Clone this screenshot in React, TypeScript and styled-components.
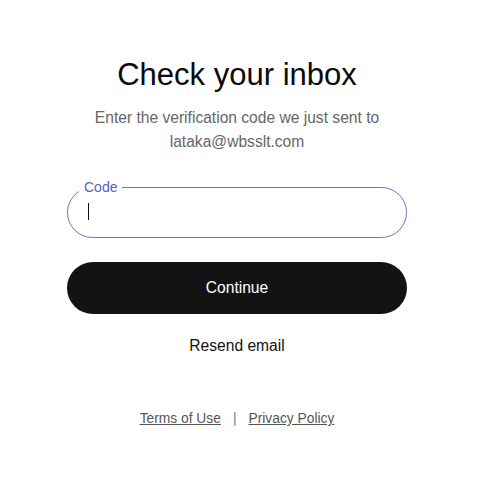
import React from "react";
import styled, { createGlobalStyle } from "styled-components";

const GlobalStyle = createGlobalStyle`
  html, body {
    margin: 0;
    padding: 0;
    background: #ffffff;
    font-family: "Liberation Sans", Arial, sans-serif;
  }
`;

const Page = styled.main`
  width: 483px;
  height: 484px;
  box-sizing: border-box;
  padding: 56px 0 0 67px;
`;

const Column = styled.section`
  width: 340px;
  display: flex;
  flex-direction: column;
  align-items: stretch;
`;

const Title = styled.h1`
  margin: 0;
  font-size: 31px;
  font-weight: 400;
  line-height: 38px;
  color: #0a0a0a;
  text-align: center;
`;

const Subtitle = styled.p`
  margin: 12px 0 0;
  font-size: 15.6px;
  line-height: 24px;
  color: #666666;
  text-align: center;
`;

const Field = styled.fieldset`
  margin: 26px 0 0;
  padding: 0 20px;
  height: 58px;
  box-sizing: border-box;
  border: 1px solid #6a72c6;
  border-radius: 26px;
`;

const Legend = styled.legend`
  padding: 0 5px;
  margin-left: -9px;
  font-size: 14px;
  line-height: 14px;
  color: #4f62c0;
`;

const Caret = styled.span`
  display: block;
  width: 1px;
  height: 17px;
  background: #111;
  margin-top: 9px;
`;

const PrimaryButton = styled.button`
  margin-top: 24px;
  height: 52px;
  border: none;
  border-radius: 26px;
  background: #131313;
  color: #ffffff;
  font-family: inherit;
  font-size: 15.6px;
  cursor: pointer;
`;

const LinkButton = styled.button`
  margin-top: 20px;
  align-self: center;
  border: none;
  background: none;
  padding: 0;
  font-family: inherit;
  font-size: 15.6px;
  line-height: 24px;
  color: #111111;
  cursor: pointer;
`;

const Footer = styled.footer`
  margin-top: 52px;
  display: flex;
  justify-content: center;
  align-items: center;
  gap: 12px;
  font-size: 13.8px;
  line-height: 18px;
  color: #555555;
`;

const FooterLink = styled.a`
  color: #555555;
  text-decoration: underline;
`;

const Divider = styled.span`
  color: #777777;
`;

export default function App() {
  return (
    <>
      <GlobalStyle />
      <Page>
        <Column>
          <Title>Check your inbox</Title>
          <Subtitle>
            Enter the verification code we just sent to
            <br />
            lataka@wbsslt.com
          </Subtitle>
          <Field>
            <Legend>Code</Legend>
            <Caret />
          </Field>
          <PrimaryButton type="button">Continue</PrimaryButton>
          <LinkButton type="button">Resend email</LinkButton>
          <Footer>
            <FooterLink href="#">Terms of Use</FooterLink>
            <Divider>|</Divider>
            <FooterLink href="#">Privacy Policy</FooterLink>
          </Footer>
        </Column>
      </Page>
    </>
  );
}
